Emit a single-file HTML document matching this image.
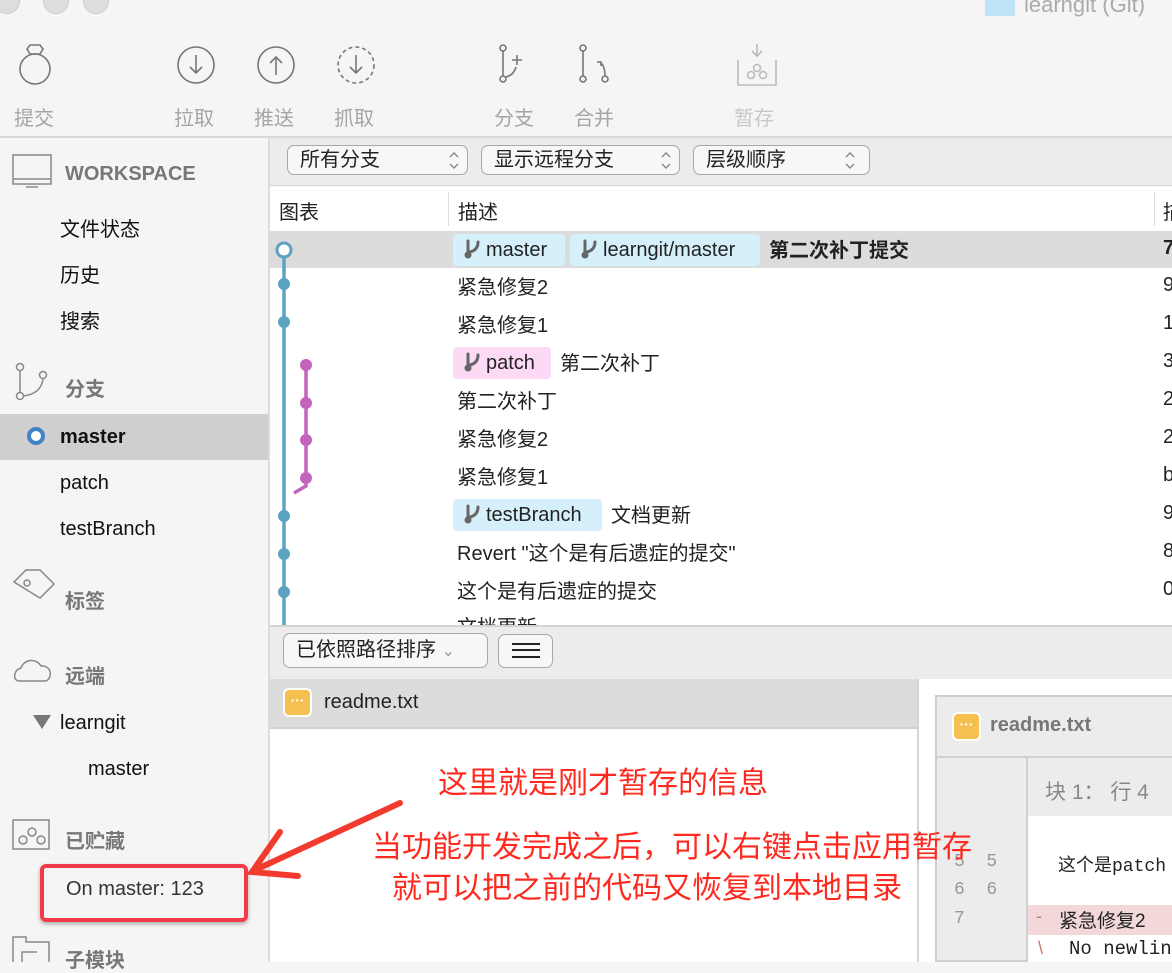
<!DOCTYPE html>
<html><head><meta charset="utf-8"><style>
*{margin:0;padding:0;box-sizing:border-box}
body{width:1172px;height:962px;overflow:hidden;position:relative;background:#f5f5f5;font-family:"Liberation Sans","Noto Sans CJK SC",sans-serif;color:#222}
.a{position:absolute;white-space:nowrap}
.tb{font-size:20px;color:#a5a5a5}
.sb{font-size:20px;color:#111}
.sh{font-size:20px;color:#777;font-weight:bold}
.sel{border:1.5px solid #a8a8a8;border-radius:7px;background:#f7f7f7;font-size:20px;height:30px;line-height:27px;padding-left:12px}
.row{font-size:20px;color:#222}
.tag{background:#d5f0fb;border-radius:4px;height:32px;line-height:32px;padding-left:11px;font-size:20px}
.tag svg{vertical-align:-4px;margin-right:4px}
.red{color:#ff2a1f;font-size:30px}
</style></head><body>
<div class="a" style="left:-6px;top:-12px;width:26px;height:26px;border-radius:50%;background:#ddd;border:1px solid #ccc"></div>
<div class="a" style="left:43px;top:-12px;width:26px;height:26px;border-radius:50%;background:#ddd;border:1px solid #ccc"></div>
<div class="a" style="left:83px;top:-12px;width:26px;height:26px;border-radius:50%;background:#ddd;border:1px solid #ccc"></div>
<div class="a" style="left:985px;top:-4px;width:30px;height:20px;background:#bfe3f7;border-radius:2px"></div>
<div class="a" style="left:1024px;top:-8px;font-size:22px;color:#aaa">learngit (Git)</div>
<svg class="a" style="left:0;top:40px" width="800" height="50" fill="none" stroke="#777" stroke-width="1.6">
<circle cx="35" cy="29" r="15"/><path d="M30 14l-3-5 3-4h10l3 4-3 5z"/>
<circle cx="196" cy="25" r="18"/><path d="M196 15v18M190 27l6 6 6-6"/>
<circle cx="276" cy="25" r="18"/><path d="M276 35V17M270 23l6-6 6 6"/>
<circle cx="356" cy="25" r="18" stroke-dasharray="4 3"/><path d="M356 15v18M350 27l6 6 6-6"/>
<circle cx="503" cy="8" r="3"/><circle cx="503" cy="39" r="3"/><path d="M503 11v25M506 37q8-2 10-10M512 20h10M517 15v10"/>
<circle cx="583" cy="8" r="3"/><circle cx="583" cy="39" r="3"/><circle cx="605" cy="39" r="3"/><path d="M583 11v25M605 36q0-10-5-14M597 22h4v4"/>
<g stroke="#bbb"><path d="M738 20v25h38V20M757 4v12M752 11l5 5 5-5"/><circle cx="751" cy="35" r="3.5"/><circle cx="763" cy="35" r="3.5"/><circle cx="757" cy="28" r="3.5"/></g>
</svg>
<div class="a tb" style="left:14px;top:102px">提交</div>
<div class="a tb" style="left:174px;top:102px">拉取</div>
<div class="a tb" style="left:254px;top:102px">推送</div>
<div class="a tb" style="left:334px;top:102px">抓取</div>
<div class="a tb" style="left:494px;top:102px">分支</div>
<div class="a tb" style="left:574px;top:102px">合并</div>
<div class="a tb" style="left:734px;top:102px;color:#c8c8c8">暂存</div>
<div class="a" style="left:0;top:136px;width:1172px;height:2px;background:#d8d8d8"></div>
<div class="a" style="left:268px;top:138px;width:2px;height:824px;background:#dcdcdc"></div>
<svg class="a" style="left:10px;top:150px" width="50" height="820" fill="none" stroke="#888" stroke-width="1.5">
<rect x="3" y="5" width="38" height="29"/><path d="M3 29h38M16 37h12"/>
<circle cx="10" cy="217" r="3.5"/><circle cx="10" cy="246" r="3.5"/><circle cx="33" cy="225" r="3.5"/><path d="M10 221v21M13 246q18-2 20-17"/>
<path d="M4 432l12-12h14l14 14-14 14z"/><circle cx="17" cy="433" r="3"/>
<path d="M5 528a8 8 0 0 1 6-10a11 11 0 0 1 20-2a8 8 0 0 1 5 15h-28a5 5 0 0 1-3-3z"/>
<rect x="3" y="670" width="36" height="29"/><circle cx="13" cy="690" r="4"/><circle cx="22" cy="682" r="4"/><circle cx="31" cy="690" r="4"/>
<path d="M3 812v-25h13v5h23v20M12 812v-10h15"/>
</svg>
<div class="a sh" style="left:65px;top:163px">WORKSPACE</div>
<div class="a sb" style="left:60px;top:213px">文件状态</div>
<div class="a sb" style="left:60px;top:259px">历史</div>
<div class="a sb" style="left:60px;top:305px">搜索</div>
<div class="a sh" style="left:65px;top:373px">分支</div>
<div class="a" style="left:0;top:414px;width:268px;height:46px;background:#cfcfcf"></div>
<div class="a" style="left:27px;top:427px;width:18px;height:18px;border-radius:50%;border:4px solid #3f83c8;background:#fff"></div>
<div class="a sb" style="left:60px;top:426px;font-weight:bold">master</div>
<div class="a sb" style="left:60px;top:472px">patch</div>
<div class="a sb" style="left:60px;top:518px">testBranch</div>
<div class="a sh" style="left:65px;top:585px">标签</div>
<div class="a sh" style="left:65px;top:660px">远端</div>
<div class="a" style="left:33px;top:715px;width:0;height:0;border-left:9px solid transparent;border-right:9px solid transparent;border-top:14px solid #777"></div>
<div class="a sb" style="left:60px;top:712px">learngit</div>
<div class="a sb" style="left:88px;top:758px">master</div>
<div class="a sh" style="left:65px;top:825px">已贮藏</div>
<div class="a sb" style="left:66px;top:878px;color:#333">On master: 123</div>
<div class="a sh" style="left:65px;top:944px">子模块</div>
<div class="a" style="left:40px;top:864px;width:208px;height:58px;border:4px solid #f23a4a;border-radius:6px;box-shadow:0 2px 4px rgba(0,0,0,.3)"></div>
<div class="a" style="left:270px;top:138px;width:902px;height:48px;background:#ececec;border-bottom:1px solid #d8d8d8"></div>
<div class="a sel" style="left:287px;top:145px;width:181px;line-height:29px">所有分支</div>
<div class="a sel" style="left:481px;top:145px;width:199px;line-height:29px">显示远程分支</div>
<div class="a sel" style="left:693px;top:145px;width:177px;line-height:29px">层级顺序</div>
<svg class="a" style="left:440px;top:148px" width="440" height="26" fill="none" stroke="#888" stroke-width="1.4"><path d="M10 9l4-4 4 4M10 16l4 4 4-4M222 9l4-4 4 4M222 16l4 4 4-4M406 9l4-4 4 4M406 16l4 4 4-4"/></svg>
<div class="a" style="left:270px;top:187px;width:902px;height:440px;background:#fff"></div>
<div class="a" style="left:448px;top:192px;width:1px;height:34px;background:#ddd"></div>
<div class="a" style="left:1154px;top:192px;width:1px;height:34px;background:#ddd"></div>
<div class="a row" style="left:279px;top:196px">图表</div>
<div class="a row" style="left:458px;top:196px">描述</div>
<div class="a row" style="left:1163px;top:196px">描</div>
<div class="a" style="left:270px;top:231px;width:902px;height:37px;background:#dcdcdc"></div>
<svg class="a" style="left:270px;top:231px" width="60" height="396">
<path d="M14 18V396" stroke="#5ba3c1" stroke-width="3.5"/>
<path d="M36 134v121l-12 7" stroke="#c364bc" stroke-width="3.5" fill="none"/>
<circle cx="14" cy="19" r="7" fill="#fff" stroke="#5ba3c1" stroke-width="3"/>
<g fill="#5ba3c1"><circle cx="14" cy="53" r="6"/><circle cx="14" cy="91" r="6"/><circle cx="14" cy="285" r="6"/><circle cx="14" cy="323" r="6"/><circle cx="14" cy="361" r="6"/></g>
<g fill="#c364bc"><circle cx="36" cy="134" r="6"/><circle cx="36" cy="172" r="6"/><circle cx="36" cy="209" r="6"/><circle cx="36" cy="247" r="6"/></g>
</svg>
<svg width="0" height="0" style="position:absolute"><defs><g id="br" fill="none" stroke="#666" stroke-width="3" stroke-linecap="round"><path d="M4 3v14M14 4q0 8-8 10"/><circle cx="4" cy="17" r="2" fill="#666"/></g></defs></svg>
<div class="a tag" style="left:453px;top:234px;width:112px"><svg width="18" height="22"><use href="#br"/></svg>master</div>
<div class="a tag" style="left:570px;top:234px;width:190px"><svg width="18" height="22"><use href="#br"/></svg>learngit/master</div>
<div class="a row" style="left:769px;top:234px;font-weight:bold">第二次补丁提交</div>
<div class="a row" style="left:1163px;top:237px;font-weight:bold">7</div>
<div class="a row" style="left:457px;top:271px">紧急修复2</div><div class="a row" style="left:1163px;top:274px">9</div>
<div class="a row" style="left:457px;top:309px">紧急修复1</div><div class="a row" style="left:1163px;top:312px">1</div>
<div class="a tag" style="left:453px;top:347px;width:98px;background:#fcdaf6"><svg width="18" height="22"><use href="#br"/></svg>patch</div>
<div class="a row" style="left:560px;top:347px">第二次补丁</div><div class="a row" style="left:1163px;top:350px">3</div>
<div class="a row" style="left:457px;top:385px">第二次补丁</div><div class="a row" style="left:1163px;top:388px">2</div>
<div class="a row" style="left:457px;top:423px">紧急修复2</div><div class="a row" style="left:1163px;top:426px">2</div>
<div class="a row" style="left:457px;top:461px">紧急修复1</div><div class="a row" style="left:1163px;top:464px">b</div>
<div class="a tag" style="left:453px;top:499px;width:149px"><svg width="18" height="22"><use href="#br"/></svg>testBranch</div>
<div class="a row" style="left:611px;top:499px">文档更新</div><div class="a row" style="left:1163px;top:502px">9</div>
<div class="a row" style="left:457px;top:537px">Revert "这个是有后遗症的提交"</div><div class="a row" style="left:1163px;top:540px">8</div>
<div class="a row" style="left:457px;top:575px">这个是有后遗症的提交</div><div class="a row" style="left:1163px;top:578px">0</div>
<div class="a" style="left:270px;top:612px;width:902px;height:13px;overflow:hidden"><div class="a row" style="left:187px;top:-1px">文档更新</div></div>
<div class="a" style="left:270px;top:625px;width:902px;height:54px;background:#ececec;border-top:2px solid #d4d4d4"></div>
<div class="a sel" style="left:283px;top:633px;width:205px;height:35px;line-height:32px">已依照路径排序 <span style="color:#999;font-size:16px">⌄</span></div>
<div class="a sel" style="left:498px;top:634px;width:55px;height:34px;padding:0"></div>
<div class="a" style="left:512px;top:643px;width:28px;height:15px;border-top:2px solid #222;border-bottom:2px solid #222"></div>
<div class="a" style="left:512px;top:649px;width:28px;height:2px;background:#222"></div>
<div class="a" style="left:270px;top:679px;width:647px;height:283px;background:#fff"></div>
<div class="a" style="left:270px;top:679px;width:647px;height:50px;background:#dcdcdc;border-bottom:2px solid #d0d0d0"></div>
<div class="a" style="left:283px;top:688px;width:29px;height:29px;border-radius:6px;background:#f5c04f;border:2px solid #fff;color:#fff;font-size:14px;text-align:center;line-height:20px;font-weight:bold">···</div>
<div class="a" style="left:324px;top:691px;font-size:20px">readme.txt</div>
<div class="a" style="left:917px;top:679px;width:2px;height:283px;background:#d4d4d4"></div>
<div class="a" style="left:919px;top:679px;width:253px;height:283px;background:#fff"></div>
<div class="a" style="left:935px;top:695px;width:237px;height:267px;background:#ececec;border:2px solid #cfcfcf;border-right:none"></div>
<div class="a" style="left:952px;top:712px;width:29px;height:29px;border-radius:6px;background:#f5c04f;border:2px solid #fff;color:#fff;font-size:14px;text-align:center;line-height:20px;font-weight:bold">···</div>
<div class="a" style="left:990px;top:714px;font-size:20px;font-weight:bold;color:#777">readme.txt</div>
<div class="a" style="left:937px;top:756px;width:235px;height:2px;background:#d0d0d0"></div>
<div class="a" style="left:1026px;top:758px;width:2px;height:204px;background:#d0d0d0"></div>
<div class="a" style="left:1028px;top:816px;width:144px;height:146px;background:#fff"></div>
<div class="a" style="left:1045px;top:776px;font-size:21px;color:#888">块 1： 行 4</div>
<div class="a" style="left:954px;top:852px;font-size:18px;color:#999;font-family:'Liberation Mono',monospace">5&nbsp;&nbsp;5</div>
<div class="a" style="left:954px;top:880px;font-size:18px;color:#999;font-family:'Liberation Mono',monospace">6&nbsp;&nbsp;6</div>
<div class="a" style="left:954px;top:909px;font-size:18px;color:#999;font-family:'Liberation Mono',monospace">7</div>
<div class="a" style="left:1058px;top:851px;font-size:18px;font-family:'Liberation Mono','Noto Sans CJK SC',monospace">这个是patch</div>
<div class="a" style="left:1028px;top:905px;width:144px;height:30px;background:#f2d8d8"></div>
<div class="a" style="left:1036px;top:906px;font-size:18px;color:#c77">-</div>
<div class="a" style="left:1059px;top:906px;font-size:19px">紧急修复2</div>
<div class="a" style="left:1038px;top:938px;font-size:18px;color:#c77">\</div>
<div class="a" style="left:1069px;top:938px;font-size:19px;font-family:'Liberation Mono',monospace">No newlin</div>
<div class="a red" style="left:438px;top:758px">这里就是刚才暂存的信息</div>
<div class="a red" style="left:372px;top:822px">当功能开发完成之后，可以右键点击应用暂存</div>
<div class="a red" style="left:392px;top:863px">就可以把之前的代码又恢复到本地目录</div>
<svg class="a" style="left:240px;top:795px" width="170" height="100"><g stroke="#f23a2f" stroke-width="6" stroke-linecap="round" fill="none"><path d="M160 8L15 75"/><path d="M40 37L12 77l46 4"/></g></svg>
</body></html>
